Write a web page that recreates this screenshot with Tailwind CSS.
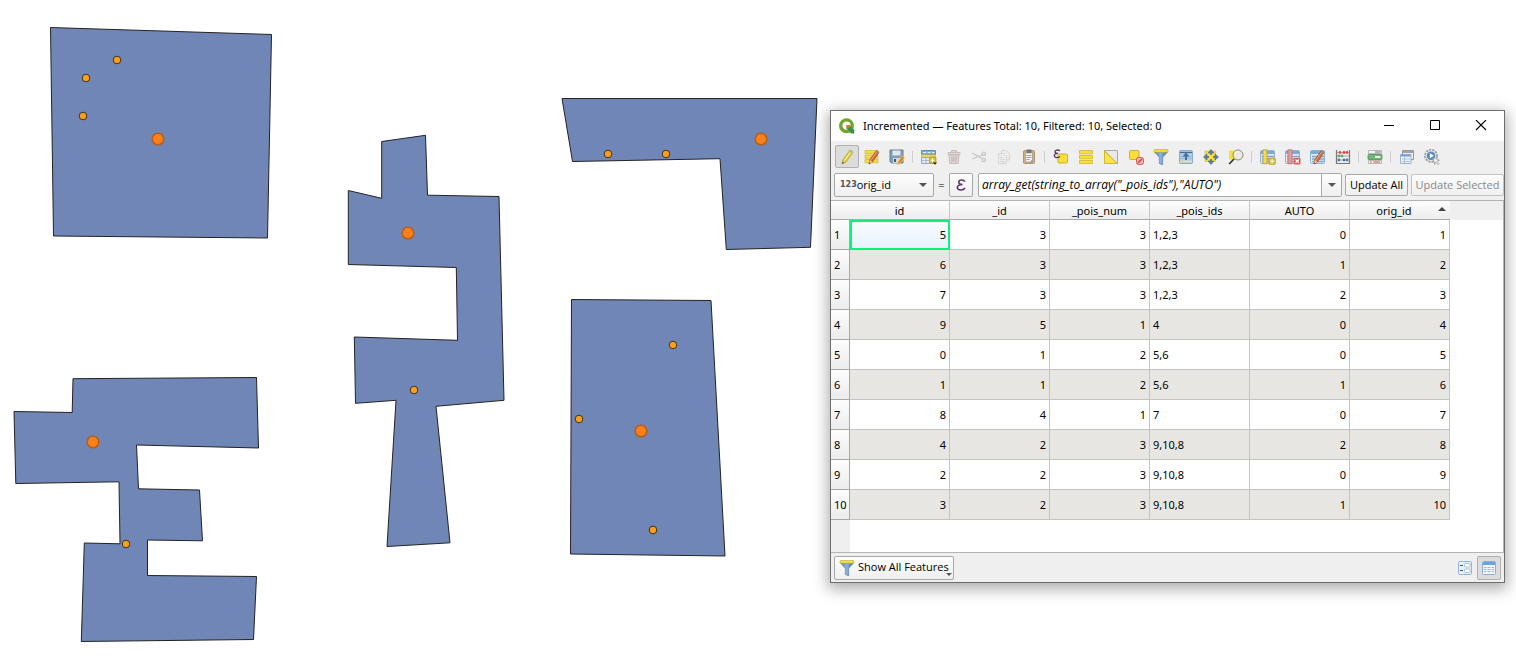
<!DOCTYPE html>
<html lang="en">
<head>
<meta charset="utf-8">
<title>Incremented</title>
<script src="https://cdn.jsdelivr.net/npm/@tailwindcss/browser@4"></script>
</head>
<body class="bg-white font-['Open_Sans','Noto_Sans',sans-serif] text-black text-[11px]">
<svg width="0" height="0" class="absolute">
  <defs>
    <linearGradient id="fun" x1="0" x2="1"><stop offset="0" stop-color="#4f7fb8"/><stop offset=".45" stop-color="#8fb3dc"/><stop offset="1" stop-color="#46709f"/></linearGradient>
    <symbol id="pencil" viewBox="0 0 16 16"><path d="M3 15l1-4 7-10 3 2-7 10z" fill="#e8d23c" stroke="#a8992f" stroke-width=".8"/><path d="M5.500 11.500L12 2.500" stroke="#fff59a" stroke-width="1"/><path d="M11 1l3 2-1 1.500-3-2z" fill="#b9b9a8"/><path d="M3 15l.6-2.200 1.500 1z" fill="#555"/></symbol>
    <symbol id="redpencil" viewBox="0 0 16 16"><path d="M5 15l.8-4 6.700-9.500 2.500 1.800L8.300 13z" fill="#dd6a32" stroke="#8d4a28" stroke-width=".8"/><path d="M7 11l6-8.500" stroke="#ffb27a" stroke-width=".8"/><path d="M5 15l.8-4 2.500 2z" fill="#f3d9a8"/><path d="M5 15l.3-1.700 1 .8z" fill="#222"/><path d="M12.500 1.500l2.500 1.800-.8 1.200-2.500-1.800z" fill="#999"/></symbol>
    <symbol id="grid" viewBox="0 0 16 16"><rect x=".5" y="1.500" width="14" height="13" rx="1" fill="#dfeaf5" stroke="#8fb2d6"/><path d="M1 2h13v3H1z" fill="#7ba9d8"/><path d="M2 7.500h12M2 10h12M2 12.500h12" stroke="#86a5c8" stroke-width="1.300"/></symbol>
    <symbol id="funnel" viewBox="0 0 16 16"><path d="M1.500 3h13l-4.800 5.500V16l-3.400-1.500v-6z" fill="url(#fun)" stroke="#4c77a8" stroke-width=".5"/><rect x="1" y=".5" width="14" height="2.800" rx=".6" fill="#f3df3e" stroke="#b5a93c" stroke-width=".6"/></symbol>
  </defs>
</svg>
<main class="flex items-start min-h-screen">
  <section aria-label="Map canvas" class="shrink-0 w-[830px]">
    <svg viewBox="0 0 830 659" class="block w-full" role="img" aria-label="Polygons and points">
      <g fill="#7086b7" stroke="#232323" stroke-width="1" stroke-linejoin="bevel">
        <path d="M50.500 27.500L271.500 34.500L267.500 238L53.500 236z"/>
        <path d="M73 378.700L256.500 377.500L258.500 448L136.500 445L138.500 488.800L199.500 490L202.500 540.800L147.500 540V575.500L256.500 576.500L253.500 639.500L81.300 641.500L84.300 543L120 543.800L119 481.800L15.800 483.500L14 411.500L72.200 412.500z"/>
        <path d="M381.700 141.500L425.500 135.300L427.500 195.200L499 196.500L504 400.300L436 406.300L450 542.800L387 546.500L396 400.300L355.500 403.300L354.300 337L457.500 340.300L456.300 267.500L348.300 264.500V190.500L381.700 198.300z"/>
        <path d="M562 98.500H817L810.500 247.300L726.300 249.500L720 158.700L572.500 161.500z"/>
        <path d="M571.500 299.500L711 300.500L725 556L570.500 554z"/>
      </g>
      <g fill="#ff9e17" stroke="#3a3427" stroke-width="1">
        <circle cx="117" cy="60" r="3.800"/><circle cx="86" cy="78" r="3.800"/><circle cx="83" cy="116" r="3.800"/>
        <circle cx="126" cy="544" r="3.800"/><circle cx="414" cy="390" r="3.800"/><circle cx="608" cy="154" r="3.800"/>
        <circle cx="666" cy="154" r="3.800"/><circle cx="673" cy="345" r="3.800"/><circle cx="579" cy="419" r="3.800"/><circle cx="653" cy="530" r="3.800"/>
      </g>
      <g fill="#fb801c" stroke="#b85e14" stroke-width="1.500">
        <circle cx="158" cy="139" r="5.800"/><circle cx="93" cy="442" r="5.800"/><circle cx="408" cy="233" r="5.800"/><circle cx="761" cy="139" r="5.800"/><circle cx="641" cy="431" r="5.800"/>
      </g>
    </svg>
  </section>

  <section aria-label="Attribute table" class="mt-[110px] mr-[11px] flex-1 min-w-0 border border-[#6e6e6e] bg-[#efefef] shadow-[0_4px_14px_2px_rgba(0,0,0,0.33)]">
    <header class="flex h-[30px] items-center bg-white pl-2">
      <svg class="size-4 shrink-0" viewBox="0 0 16 16"><circle cx="7.500" cy="7.700" r="5.800" fill="none" stroke="#6fa62b" stroke-width="3.400"/><path d="M7 6.500l2.500.3 6 6.500-2.500 2.700-6-6.500z" fill="#fff"/><path d="M7.500 7h3l4.800 5v3.500h-3.200L7.500 10.500z" fill="#3f9244"/><path d="M7.500 7h3l1 1-3.500 3-.5-.5z" fill="#ee7913"/></svg>
      <h1 class="ml-2 flex-1 truncate font-['Noto_Sans',sans-serif] text-[11px]">Incremented — Features Total: 10, Filtered: 10, Selected: 0</h1>
      <button aria-label="Minimize" class="flex h-[30px] w-[46px] items-center justify-center"><svg class="size-3" viewBox="0 0 12 12"><path d="M1 5.500h10" stroke="#000"/></svg></button>
      <button aria-label="Maximize" class="flex h-[30px] w-[46px] items-center justify-center"><svg class="size-3" viewBox="0 0 12 12"><path d="M1.500 .5h9v9h-9z" stroke="#000" fill="none"/></svg></button>
      <button aria-label="Close" class="flex h-[30px] w-[46px] items-center justify-center"><svg class="size-3" viewBox="0 0 12 12"><path d="M1 0l10 10M11 0L1 10" stroke="#000" stroke-width="1.100"/></svg></button>
    </header>

    <div role="toolbar" aria-label="Table tools" class="flex h-8 items-center gap-px pl-1 pb-px">
      <button aria-label="Toggle editing" aria-pressed="true" class="flex h-[23px] w-6 items-center justify-center rounded-xs border border-[#b0b0b0] bg-[#dcdcdc]"><svg class="size-4"><use href="#pencil"/></svg></button>
      <button aria-label="Multi edit" class="flex h-[23px] w-6 items-center justify-center"><svg class="size-4" viewBox="0 0 16 16"><path d="M1 1.500h13v3.300H1zM1 6h13v3.300H1zM1 10.500h13v3.300H1z" fill="#f5dc3a" stroke="#d0b92e" stroke-width=".7"/><use href="#redpencil" width="16" height="16"/></svg></button>
      <button aria-label="Save edits" class="flex h-[23px] w-6 items-center justify-center"><svg class="size-4" viewBox="0 0 16 16"><path d="M1 1h13v13H2.500L1 12.500z" fill="#7f9fb5" stroke="#66808f"/><path d="M3.500 1.500h8v5h-8z" fill="#dfe7ec"/><path d="M4 9h7v5H4z" fill="#d4d8db"/><path d="M5 10h2v3H5z" fill="#44566a"/><path d="M8.500 16l.8-3.500 4-5.500 2.200 1.500-4 5.500z" fill="#e57035" stroke="#f0e03c" stroke-width=".8"/></svg></button>
      <span class="ml-[2px] mr-[3px] h-3 w-px bg-[#cfcfcf]"></span>
      <button aria-label="Add feature" class="flex h-[23px] w-6 items-center justify-center"><svg class="size-4" viewBox="0 0 16 16"><path d="M.5 1.500h14v4H.5z" fill="#7fabd8" stroke="#5e8fc4"/><path d="M2 3.500h3M6.500 3.500h3M11 3.500h2.500" stroke="#e5f0fa"/><path d="M.5 5.800h14v2.400H.5z" fill="#f5e050" stroke="#cdb940" stroke-width=".7"/><path d="M.5 8.500h14v6H.5z" fill="#dfe9f3" stroke="#9ab"/><path d="M5 8.500v6M.5 11.500h9" stroke="#9ab" stroke-width=".7"/><rect x="8.500" y="8" width="6.500" height="6.500" rx="1" fill="#dcbb2a" stroke="#a48a20" stroke-width=".6"/><path d="M11.500 9.200v4M9.500 11.200h4" stroke="#fff"/><path d="M12 13.500h4l-2 2.300z" fill="#222"/></svg></button>
      <button disabled aria-label="Delete features" class="flex h-[23px] w-6 items-center justify-center"><svg class="size-4" viewBox="0 0 16 16" fill="#dfd5d5" stroke="#c8bebe"><path d="M2 3.500h12v2H2zM5.500 1.500h5v2h-5zM3 6h10l-.7 8.500H3.700z"/><path d="M6 7.500v5.500M8 7.500v5.500M10 7.500v5.500" stroke="#bdb2b2"/></svg></button>
      <button disabled aria-label="Cut" class="flex h-[23px] w-6 items-center justify-center"><svg class="size-4" viewBox="0 0 16 16" fill="none" stroke="#c6c6c6" stroke-width="1.300"><path d="M1 4l10 5.500M1.500 10L12 5.500"/><circle cx="12.800" cy="4.800" r="1.700"/><circle cx="12.800" cy="11" r="1.700"/></svg></button>
      <button disabled aria-label="Copy" class="flex h-[23px] w-6 items-center justify-center"><svg class="size-4" viewBox="0 0 16 16" fill="#ececec" stroke="#d6d6d6"><path d="M5.500 1.500h5l3 3v6.500h-8z"/><path d="M2.500 4.500h5l3 3v7h-8z"/><path d="M4 8.500h3M4 10.500h5M4 12.500h5"/></svg></button>
      <button aria-label="Paste" class="flex h-[23px] w-6 items-center justify-center"><svg class="size-4" viewBox="0 0 16 16"><rect x="2.500" y="1.500" width="11" height="13" rx="1" fill="#cfb086" stroke="#b4946a"/><path d="M4.500 4h7v9h-7z" fill="#f4f4f4" stroke="#8d8d8d" stroke-width=".6"/><rect x="5.500" y=".5" width="5" height="3.500" rx=".7" fill="#777"/><path d="M5.500 6.500h5M5.500 8.500h5M5.500 10.500h3" stroke="#888" stroke-width=".8"/><path d="M11.500 10v3H9z" fill="#999"/></svg></button>
      <span class="ml-[2px] mr-[3px] h-3 w-px bg-[#cfcfcf]"></span>
      <button aria-label="Select by expression" class="flex h-[23px] w-6 items-center justify-center"><svg class="size-4" viewBox="0 0 16 16"><rect x="5" y="5" width="9.500" height="9" rx="1" fill="#f7e03c" stroke="#cbb22a"/><path d="M7 1.800C5 .4 2 1 2 2.800 2 4 3 4.400 5 4.400 2.500 4.400 1.200 5.200 1.300 6.600 1.500 9 5 9 7 7.500" fill="none" stroke="#5c3566" stroke-width="1.300"/></svg></button>
      <button aria-label="Select all" class="flex h-[23px] w-6 items-center justify-center"><svg class="size-4" viewBox="0 0 16 16"><path d="M1.500 1.500h13v3.300h-13zM1.500 6.500h13v3.300h-13zM1.500 11.500h13v3h-13z" fill="#f7df3c" stroke="#cfb52c" stroke-width=".8"/></svg></button>
      <button aria-label="Invert selection" class="flex h-[23px] w-6 items-center justify-center"><svg class="size-4" viewBox="0 0 16 16"><path d="M1.500 1.500h13v13z" fill="#e9e9e9" stroke="#a9a9a9"/><path d="M1.500 2v12.500h13z" fill="#fae44a" stroke="#d3b92c"/></svg></button>
      <button aria-label="Deselect all" class="flex h-[23px] w-6 items-center justify-center"><svg class="size-4" viewBox="0 0 16 16"><rect x="1.500" y="1.500" width="9.500" height="9" rx="1" fill="#f7e03c" stroke="#d8a93a"/><rect x="8.500" y="8.500" width="7" height="7" rx="2" fill="#e9b5b5" stroke="#d45a5a"/><path d="M10 14l4-4" stroke="#cf3c3c" stroke-width="1.500"/></svg></button>
      <button aria-label="Filter" class="flex h-[23px] w-6 items-center justify-center"><svg class="size-4"><use href="#funnel"/></svg></button>
      <button aria-label="Move selection to top" class="flex h-[23px] w-6 items-center justify-center"><svg class="size-4" viewBox="0 0 16 16"><rect x="1.500" y="1.500" width="13" height="13" rx="1" fill="#b4cde8" stroke="#86a9d0"/><path d="M2 3.500h12" stroke="#4a6c90" stroke-width="1.300"/><path d="M2 7.500h12M2 9.500h12" stroke="#94b2d3" stroke-width=".8"/><path d="M2 12.500h12" stroke="#efe48a" stroke-width="1.500"/><path d="M8 3.500l3.500 4H9V11H7V7.500H4.500z" fill="#416f9f"/></svg></button>
      <button aria-label="Pan map to selection" class="flex h-[23px] w-6 items-center justify-center"><svg class="size-4" viewBox="0 0 16 16"><rect x="2" y="2" width="10.500" height="10.500" fill="#f7e03c" stroke="#d5bd3a" stroke-width=".6"/><path d="M8 .5l3 3.500H5zM8 15.500L5 12h6zM.5 8L4 5v6zM15.500 8L12 11V5z" fill="#5c80ad" stroke="#48688f" stroke-width=".6"/><path d="M8 4v2M8 10v2M4 8h2M10 8h2" stroke="#48688f" stroke-width="1.500"/></svg></button>
      <button aria-label="Zoom map to selection" class="flex h-[23px] w-6 items-center justify-center"><svg class="size-4" viewBox="0 0 16 16"><rect x="1" y="1.500" width="9" height="9" fill="#f7df3c"/><circle cx="10" cy="6" r="5" fill="#eceadc" stroke="#8d8a7c"/><path d="M7 4.500c.7-1.400 2-2 3.500-2" fill="none" stroke="#fff" stroke-width="1.200"/><path d="M6 10L1.200 15" stroke="#3a3421" stroke-width="1.800"/></svg></button>
      <span class="ml-[2px] mr-[3px] h-3 w-px bg-[#cfcfcf]"></span>
      <button aria-label="New field" class="flex h-[23px] w-6 items-center justify-center"><svg class="size-4" viewBox="0 0 16 16"><use href="#grid" width="16" height="16"/><path d="M3 .8h4v14H3z" fill="#f0d95a" stroke="#b89f3a" stroke-width=".8"/><rect x="8.800" y="9" width="6.700" height="6.500" rx="1.200" fill="#dcbb2a" stroke="#b5982a" stroke-width=".5"/><path d="M12.200 10v4.500M10 12.200h4.500" stroke="#fff"/></svg></button>
      <button aria-label="Delete field" class="flex h-[23px] w-6 items-center justify-center"><svg class="size-4" viewBox="0 0 16 16"><use href="#grid" width="16" height="16"/><path d="M3 .8h4v14H3z" fill="#e59a9a" stroke="#c96c6c" stroke-width=".8"/><rect x="8.800" y="9" width="6.700" height="6.500" rx="1.200" fill="#dd5a5a"/><path d="M10.500 10.500l3.400 3.400M13.900 10.500l-3.400 3.400" stroke="#fff" stroke-width="1.200"/></svg></button>
      <button aria-label="Organize columns" class="flex h-[23px] w-6 items-center justify-center"><svg class="size-4" viewBox="0 0 16 16"><use href="#grid" width="16" height="16"/><use href="#redpencil" x="-1" width="16" height="16"/></svg></button>
      <button aria-label="Field calculator" class="flex h-[23px] w-6 items-center justify-center"><svg class="size-4" viewBox="0 0 16 16"><path d="M1.500 1v14M14.500 1v14M1 14.500h14" stroke="#777" stroke-width="1.200"/><path d="M2 3.500h12M2 7h12M2 11h12" stroke="#999" stroke-width=".8"/><g fill="#d94848"><circle cx="5" cy="3.500" r="1.400"/><circle cx="9" cy="3.500" r="1.400"/><circle cx="12" cy="3.500" r="1.400"/></g><g fill="#63a968"><circle cx="4" cy="7" r="1.400"/><circle cx="7" cy="7" r="1.400"/></g><g fill="#4f7aa8"><circle cx="4" cy="11" r="1.400"/><circle cx="9" cy="11" r="1.400"/><circle cx="12" cy="11" r="1.400"/></g></svg></button>
      <span class="ml-[2px] mr-[3px] h-3 w-px bg-[#cfcfcf]"></span>
      <button aria-label="Conditional formatting" class="flex h-[23px] w-6 items-center justify-center"><svg class="size-4" viewBox="0 0 16 16"><path d="M1.500 1.500h13v3h-13zM1.500 11.500h13v3h-13z" fill="#f2f2f2" stroke="#aaa" stroke-width=".8"/><rect x="1" y="5.500" width="14" height="5" rx=".8" fill="#6fb779" stroke="#4f8c58" stroke-width=".8"/><path d="M8 8h5.500" stroke="#e4f3e6" stroke-width="2"/><path d="M8 3h5.500" stroke="#777"/><path d="M3 13h1.500M6.500 13H13" stroke="#d14a4a"/></svg></button>
      <span class="ml-[2px] mr-[3px] h-3 w-px bg-[#cfcfcf]"></span>
      <button aria-label="Dock table" class="flex h-[23px] w-6 items-center justify-center"><svg class="size-4" viewBox="0 0 16 16"><path d="M3.500 1.500h11v9h-11z" fill="#eee" stroke="#999"/><path d="M4 3h10" stroke="#888" stroke-width="1.500"/><path d="M1.500 5.500h10.500v9H1.500z" fill="#eef4fa" stroke="#9ab0c8"/><path d="M2 6.500h9.500" stroke="#6f9fd4" stroke-width="2"/><path d="M3 10h8M3 12.500h8M5.500 8v6" stroke="#a9bfd6"/></svg></button>
      <button aria-label="Actions" class="flex h-[23px] w-6 items-center justify-center"><svg class="size-4" viewBox="0 0 16 16"><circle cx="7" cy="6.800" r="6" fill="none" stroke="#9a9a9a" stroke-width="1.800" stroke-dasharray="2.200 1"/><circle cx="7" cy="6.800" r="4.800" fill="#5b8cc0" stroke="#dfe8f0"/><path d="M5.800 4.300L9.800 6.800 5.800 9.300z" fill="#fff"/><path d="M9 8.500l6.500 2.700-2.700 1 2.200 2.500-1 1-2.300-2.400-1 2.200z" fill="#f5f5f5" stroke="#8a8a8a" stroke-width=".7"/></svg></button>
    </div>

    <div class="flex h-[27px] items-start pl-[3px]">
      <label class="relative flex h-6 w-[100px] shrink-0 items-center rounded-xs border border-[#a8a8a8] bg-linear-to-b from-[#fdfdfd] to-[#efefef]">
        <span class="pl-[5px] font-['DejaVu_Sans',sans-serif] text-[8px] font-bold text-[#555]">123</span>
        <select aria-label="Field" class="min-w-0 flex-1 appearance-none pt-px outline-none"><option>orig_id</option></select>
        <svg class="absolute right-1.5 h-1 w-2" viewBox="0 0 8 4"><path d="M0 0h8L4 4z" fill="#555"/></svg>
      </label>
      <span class="w-[15px] shrink-0 text-center leading-6">=</span>
      <button aria-label="Expression dialog" class="flex size-6 shrink-0 items-center justify-center rounded-xs border border-[#a8a8a8] bg-linear-to-b from-[#fdfdfd] to-[#efefef]"><svg class="h-3 w-2.5" viewBox="0 0 10 12"><path d="M8.800 2.800C8 .6 3 .3 2.800 3 2.700 5 4.500 5.500 6.500 5.500 3 5.500 1.200 6.700 1.300 8.500 1.500 11.800 7.500 11.500 9 9" fill="none" stroke="#5c3566" stroke-width="1.600"/></svg></button>
      <div class="ml-[5px] flex h-6 min-w-0 flex-1 rounded-xs border border-[#a8a8a8] bg-white">
        <input aria-label="Expression" value="array_get(string_to_array(&quot;_pois_ids&quot;),&quot;AUTO&quot;)" class="min-w-0 flex-1 pl-[3px] text-[12px] italic outline-none">
        <button aria-label="Recent expressions" class="flex w-5 items-center justify-center border-l border-[#a8a8a8] bg-linear-to-b from-[#fdfdfd] to-[#efefef]"><svg class="h-1 w-2" viewBox="0 0 8 4"><path d="M0 0h8L4 4z" fill="#555"/></svg></button>
      </div>
      <button class="ml-[3px] mt-px h-[22px] w-[63px] shrink-0 rounded-xs border border-[#a8a8a8] bg-linear-to-b from-[#fdfdfd] to-[#efefef] whitespace-nowrap">Update All</button>
      <button disabled class="ml-[3px] mt-px h-[22px] w-[93px] shrink-0 rounded-xs border border-[#c4c4c4] bg-linear-to-b from-[#fbfbfb] to-[#f0f0f0] whitespace-nowrap text-[#8a8a8a]">Update Selected</button>
    </div>

    <div class="min-h-[353px] border-y border-r border-[#b4b4b4] bg-[linear-gradient(to_right,#efefef_19px,#fff_19px)]">
      <div class="bg-[linear-gradient(#efefef_19px,transparent_19px)]">
        <table class="w-[619px] table-fixed border-separate border-spacing-0 bg-white font-['Noto_Sans',sans-serif] text-[11px] leading-4">
          <colgroup><col class="w-[19px]"><col><col><col><col><col><col></colgroup>
          <thead>
            <tr class="h-[19px] bg-linear-to-b from-[#fdfdfd] to-[#ececec] *:border-b *:border-[#a8a8a8] *:p-0 *:pt-px *:font-normal">
              <th></th><th class="border-r border-r-[#c8c8c8]!">id</th><th class="border-r border-r-[#c8c8c8]!">_id</th><th class="border-r border-r-[#c8c8c8]!">_pois_num</th><th class="border-r border-r-[#c8c8c8]!">_pois_ids</th><th class="border-r border-r-[#c8c8c8]!">AUTO</th>
              <th aria-sort="ascending" class="relative pr-3!">orig_id<svg class="absolute right-1 top-1.5 h-1 w-2" viewBox="0 0 8 4"><path d="M0 4h8L4 0z" fill="#444"/></svg></th>
            </tr>
          </thead>
          <tbody id="rows"></tbody>
        </table>
      </div>
    </div>

    <footer class="flex h-[29px] items-center px-[3px]">
      <button class="relative flex h-6 w-[120px] items-center rounded-xs border border-[#a8a8a8] bg-linear-to-b from-[#fdfdfd] to-[#efefef] pl-1 whitespace-nowrap"><svg class="mr-[3px] size-4"><use href="#funnel"/></svg>Show All Features<svg class="absolute bottom-[3px] right-px h-[3px] w-1.5" viewBox="0 0 6 3"><path d="M0 0h6L3 3z" fill="#555"/></svg></button>
      <button aria-label="Form view" class="ml-auto flex size-6 items-center justify-center"><svg class="size-3.5" viewBox="0 0 14 14"><rect x=".5" y=".5" width="13" height="13" rx="1" fill="#e6eef6" stroke="#8fb4dc"/><rect x="6.500" y="2.500" width="5.500" height="3.500" rx="1" fill="#fff" stroke="#a7c3e2"/><rect x="6.500" y="8" width="5.500" height="3.500" rx="1" fill="#fff" stroke="#a7c3e2"/><path d="M2 4.500h3M2 9.500h3" stroke="#456" stroke-width="1.200"/></svg></button>
      <button aria-label="Table view" aria-pressed="true" class="flex size-6 items-center justify-center rounded-xs border border-[#b0b0b0] bg-[#dcdcdc]"><svg class="size-3.5" viewBox="0 0 14 14"><rect x=".5" y=".5" width="13" height="13" rx="1" fill="#eef3f9" stroke="#86aedb"/><path d="M1 1h12v3H1z" fill="#6fa3d8"/><path d="M2 6.500h10M2 8.500h10M2 10.500h10" stroke="#a3b6cb"/><path d="M5 4v9M9 4v9" stroke="#fff" stroke-width=".8"/></svg></button>
    </footer>
  </section>
</main>
<script>
const data = [
  [5,3,3,'1,2,3',0,1],[6,3,3,'1,2,3',1,2],[7,3,3,'1,2,3',2,3],[9,5,1,'4',0,4],[0,1,2,'5,6',0,5],
  [1,1,2,'5,6',1,6],[8,4,1,'7',0,7],[4,2,3,'9,10,8',2,8],[2,2,3,'9,10,8',0,9],[3,2,3,'9,10,8',1,10]
];
document.getElementById('rows').innerHTML = data.map((row, i) =>
  `<tr class="h-[30px] even:bg-[#e7e6e2]"><th class="border-r border-b border-[#a8a8a8] bg-linear-to-b from-[#fdfdfd] to-[#ececec] p-0 pt-px pl-[3px] text-left font-normal">${i + 1}</th>` +
  row.map((v, j) => {
    const tone = i === 0 && j === 0 ? 'outline-2 -outline-offset-2 outline-[#0cf07c] bg-linear-to-b from-[#f8fcff] to-[#e6f2fd]' : '';
    return `<td class="border-r border-b border-[#c4c4c4] py-0 pl-[3px] pr-[3px] ${j === 3 ? 'text-left' : 'text-right'} ${tone}">${v}</td>`;
  }).join('') + '</tr>').join('');
</script>
</body>
</html>
